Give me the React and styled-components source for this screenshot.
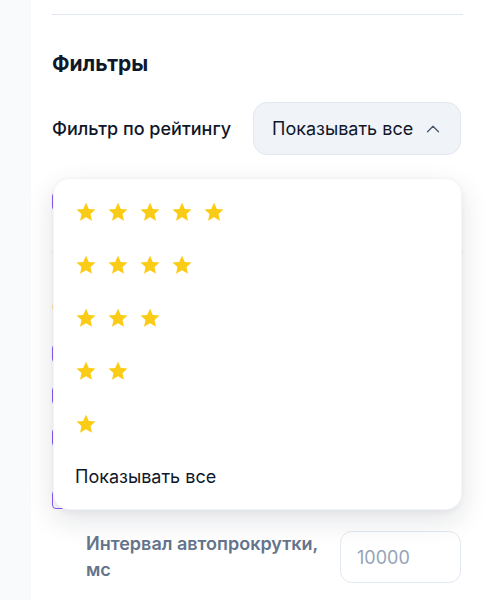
import React, { useState } from "react";
import styled, { createGlobalStyle } from "styled-components";

const GlobalStyle = createGlobalStyle`
  * { box-sizing: border-box; }
  body {
    margin: 0;
    background: #f8fafc;
    font-family: Inter, "Noto Sans", "Liberation Sans", sans-serif;
    color: #0f172a;
  }
`;

const STAR_ROWS = [5, 4, 3, 2, 1];

const Star = () => (
  <svg width="22" height="22" viewBox="0 0 24 24">
    <polygon
      points="12,1.8 15.1,8.6 22.4,9.3 16.9,14.2 18.5,21.5 12,17.7 5.5,21.5 7.1,14.2 1.6,9.3 8.9,8.6"
      fill="#facc15"
    />
  </svg>
);

const Chevron = () => (
  <svg width="22" height="22" viewBox="0 0 24 24" fill="none" stroke="#475569" strokeWidth="1.4" strokeLinecap="round" strokeLinejoin="round">
    <path d="M6 15l6-6 6 6" />
  </svg>
);

const App = () => {
  const [open, setOpen] = useState(true);
  const [rating, setRating] = useState(0);

  return (
    <>
      <GlobalStyle />
      <Layout>
        <Rail />
        <Panel>
          <Divider />
          <Section>
            <Heading>Фильтры</Heading>
            <FilterRow>
              <RowLabel>Фильтр по рейтингу</RowLabel>
              <Select onClick={() => setOpen(!open)}>
                <span>{rating ? `${rating} ★` : "Показывать все"}</span>
                <Chevron />
              </Select>
              {open && (
                <Menu>
                  {STAR_ROWS.map((n) => (
                    <MenuItem
                      key={n}
                      onClick={() => {
                        setRating(n);
                        setOpen(false);
                      }}
                    >
                      <Stars>
                        {Array.from({ length: n }).map((_, i) => (
                          <Star key={i} />
                        ))}
                      </Stars>
                    </MenuItem>
                  ))}
                  <MenuItem
                    onClick={() => {
                      setRating(0);
                      setOpen(false);
                    }}
                  >
                    Показывать все
                  </MenuItem>
                </Menu>
              )}
            </FilterRow>
            <CheckRow $top={34}>
              <Box />
              <CheckText>Только с текстом</CheckText>
            </CheckRow>
          </Section>

          <Divider $top={39} />

          <Section $top={43}>
            <Heading>Отображение</Heading>
            <CheckList>
              <CheckRow>
                <Box />
                <CheckText>Показывать аватары</CheckText>
              </CheckRow>
              <CheckRow>
                <Box />
                <CheckText>Показывать дату</CheckText>
              </CheckRow>
              <CheckRow>
                <Box />
                <CheckText>Показывать ответы</CheckText>
              </CheckRow>
              <CheckRow $top={20}>
                <Box />
                <CheckText>Включить автопрокрутку</CheckText>
              </CheckRow>
            </CheckList>
            <IntervalRow>
              <SubLabel>Интервал автопрокрутки, мс</SubLabel>
              <NumberInput placeholder="10000" />
            </IntervalRow>
          </Section>
        </Panel>
      </Layout>
    </>
  );
};

export default App;

const Layout = styled.div`
  display: flex;
  min-height: 600px;
`;

const Rail = styled.div`
  width: 31px;
  flex-shrink: 0;
  background: #f8fafc;
`;

const Panel = styled.div`
  flex: 1;
  background: #fff;
  padding: 14px 21px 40px;
`;

const Divider = styled.div`
  height: 1px;
  background: #e2e8f0;
  margin-top: ${(p) => p.$top || 0}px;
`;

const Section = styled.div`
  margin-top: ${(p) => p.$top || 37}px;
`;

const Heading = styled.h2`
  margin: 0;
  font-size: 21px;
  line-height: 24px;
  font-weight: 700;
  color: #0f172a;
`;

const FilterRow = styled.div`
  position: relative;
  margin-top: 26px;
  display: flex;
  align-items: center;
  justify-content: space-between;
`;

const RowLabel = styled.div`
  font-size: 18px;
  font-weight: 500;
  color: #0f172a;
`;

const Select = styled.button`
  width: 208px;
  height: 53px;
  margin-right: 2px;
  display: flex;
  align-items: center;
  justify-content: space-between;
  padding: 0 16px 0 18px;
  background: #f0f3f8;
  border: 1px solid #e2e8f0;
  border-radius: 14px;
  font-family: inherit;
  font-size: 18px;
  color: #0f172a;
  cursor: pointer;
`;

const Menu = styled.div`
  position: absolute;
  top: calc(100% + 23px);
  left: 1px;
  right: 1px;
  z-index: 10;
  padding: 6px 0;
  background: #fff;
  border: 1px solid #f1f5f9;
  border-radius: 16px;
  box-shadow: 0 10px 28px rgba(15, 23, 42, 0.12), 0 2px 6px rgba(15, 23, 42, 0.04);
`;

const MenuItem = styled.div`
  height: 53px;
  display: flex;
  align-items: center;
  padding-left: 21px;
  font-size: 18px;
  color: #0f172a;
  cursor: pointer;
`;

const Stars = styled.div`
  display: flex;
  gap: 10px;
`;

const CheckList = styled.div`
  margin-top: 21px;
  display: flex;
  flex-direction: column;
  gap: 18px;
`;

const CheckRow = styled.label`
  display: flex;
  align-items: flex-start;
  gap: 16px;
  margin-top: ${(p) => p.$top || 0}px;
`;

const Box = styled.span`
  width: 19px;
  height: 19px;
  flex-shrink: 0;
  margin-top: 3px;
  border: 1.5px solid #8b5cf6;
  border-radius: 4px;
  background: #fff;
`;

const CheckText = styled.span`
  font-size: 18px;
  line-height: 24px;
  font-weight: 500;
  color: #0f172a;
`;

const IntervalRow = styled.div`
  margin-top: 20px;
  padding-left: 34px;
  display: flex;
  align-items: center;
  justify-content: space-between;
`;

const SubLabel = styled.div`
  max-width: 245px;
  font-size: 18px;
  line-height: 26px;
  font-weight: 600;
  color: #64748b;
`;

const NumberInput = styled.input`
  width: 121px;
  height: 52px;
  margin-right: 2px;
  padding: 0 16px;
  border: 1px solid #e2e8f0;
  border-radius: 12px;
  font-family: inherit;
  font-size: 18px;
  color: #0f172a;
  outline: none;
  &::placeholder {
    color: #94a3b8;
  }
`;
